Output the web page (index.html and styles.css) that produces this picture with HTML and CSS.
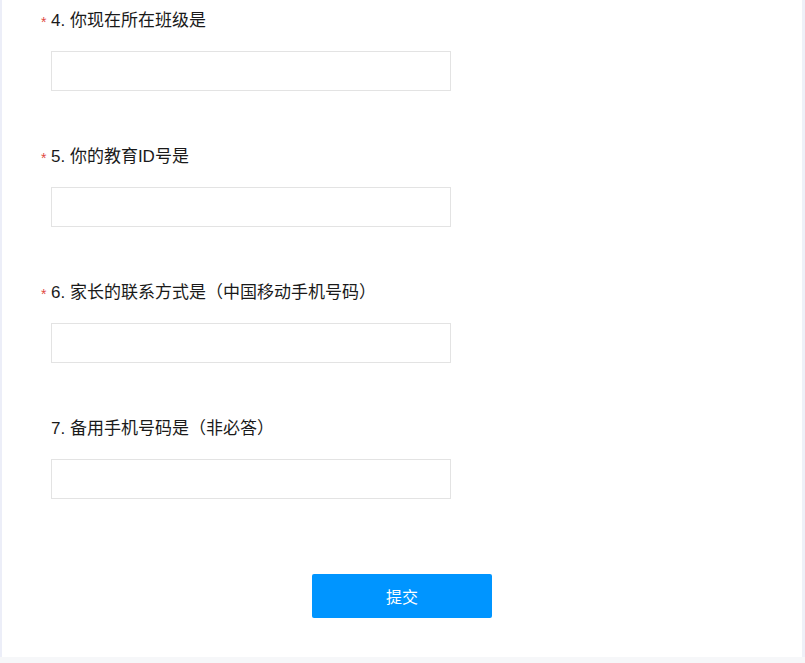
FILE: index.html
```html
<!DOCTYPE html>
<html lang="zh">
<head>
<meta charset="utf-8">
<link rel="stylesheet" href="styles.css">
</head>
<body>
<div class="page">
  <div class="card">
    <div class="question">
      <div class="label"><span class="star">*</span><span class="text">4. 你现在所在班级是</span></div>
      <input class="field" type="text">
    </div>
    <div class="question">
      <div class="label"><span class="star">*</span><span class="text">5. 你的教育ID号是</span></div>
      <input class="field" type="text">
    </div>
    <div class="question">
      <div class="label"><span class="star">*</span><span class="text">6. 家长的联系方式是（中国移动手机号码）</span></div>
      <input class="field" type="text">
    </div>
    <div class="question">
      <div class="label"><span class="star"></span><span class="text">7. 备用手机号码是（非必答）</span></div>
      <input class="field" type="text">
    </div>
    <div class="actions">
      <button class="submit" type="button">提交</button>
    </div>
  </div>
</div>
</body>
</html>
```
FILE: styles.css
```css
html, body {
  margin: 0;
  padding: 0;
}
body {
  background: #f6f7f9;
  font-family: "Liberation Sans", "Noto Sans CJK SC", sans-serif;
  color: #1a1a1a;
}
.page {
  width: 805px;
  height: 663px;
  background: #f6f7f9;
  overflow: hidden;
}
.card {
  margin: 0 3px 0 2px;
  height: 657px;
  background: #ffffff;
  box-sizing: border-box;
  padding-top: 9px;
  box-shadow: -2px 0 0 #eceef8, 3px 0 0 #eef0f8;
}
.question {
  padding-left: 38px;
  margin-bottom: 54px;
}
.question:nth-child(4) {
  margin-bottom: 75px;
}
.label {
  display: flex;
  align-items: center;
  height: 24px;
  font-size: 17px;
  line-height: 24px;
}
.star {
  width: 11px;
  color: #e04a3f;
  font-size: 14px;
  line-height: 24px;
  padding-top: 1px;
  box-sizing: border-box;
  padding-left: 1px;
}
.text {
  color: #1a1a1a;
}
.field {
  display: block;
  margin: 18px 0 0 11px;
  width: 400px;
  height: 40px;
  box-sizing: border-box;
  border: 1px solid #e3e3e3;
  border-radius: 0;
  background: #fff;
  outline: none;
  padding: 0 10px;
  font-size: 14px;
}
.actions {
  display: flex;
  justify-content: center;
}
.submit {
  width: 180px;
  height: 44px;
  border: 0;
  border-radius: 2px;
  background: #0095ff;
  color: #ffffff;
  font-family: "Liberation Sans", "Noto Sans CJK SC", sans-serif;
  font-size: 16px;
  cursor: pointer;
}
```
